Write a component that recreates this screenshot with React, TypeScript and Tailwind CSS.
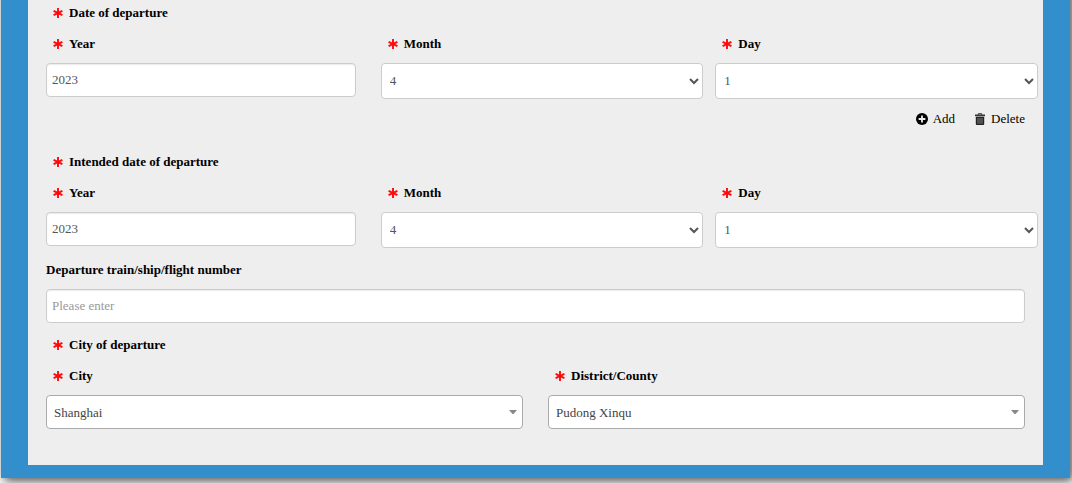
import React, { useState } from 'react';

const MONTHS = Array.from({ length: 12 }, (_, i) => String(i + 1));
const DAYS = Array.from({ length: 31 }, (_, i) => String(i + 1));

const inputClass =
  'block w-full h-[34px] px-[5px] pb-px bg-white border border-[#ccc] rounded-[4px] text-[#555] placeholder:text-[#999] shadow-[inset_0_1px_1px_rgba(0,0,0,0.08)]';

const RequiredMark = () => (
  <svg className="w-[10px] h-[10px] ml-[7px] mr-[6px] shrink-0" viewBox="0 0 10 10" aria-hidden="true">
    <path d="M5 0V10M0.6 2.8L9.4 7.2M9.4 2.8L0.6 7.2" stroke="#ff0a0a" strokeWidth="1.9" fill="none" />
  </svg>
);

const PlusCircle = () => (
  <svg className="w-3 h-3" viewBox="0 0 12 12" aria-hidden="true">
    <circle cx="6" cy="6" r="6" fill="#000" />
    <path d="M6 2.6V9.4M2.6 6H9.4" stroke="#eee" strokeWidth="1.8" />
  </svg>
);

const Trash = () => (
  <svg className="w-[10px] h-3" viewBox="0 0 10 12" aria-hidden="true">
    <path d="M3.3 1.8V0.7H6.7V1.8" stroke="#333" strokeWidth="1" fill="none" />
    <path d="M0 1.5H10V3.2H0Z" fill="#333" />
    <path d="M0.8 3.8H9.2V11Q9.2 12 8.2 12H1.8Q0.8 12 0.8 11Z" fill="#222" />
    <path d="M3 5V10.8M5 5V10.8M7 5V10.8" stroke="#aaa" strokeWidth="0.7" />
  </svg>
);

interface FieldProps {
  id: string;
  label: string;
  children: React.ReactNode;
}

const Field = ({ id, label, children }: FieldProps) => (
  <div className="min-w-0">
    <label htmlFor={id} className="flex items-center mb-[9px] font-bold text-black">
      <RequiredMark />
      {label}
    </label>
    {children}
  </div>
);

interface NumberSelectProps {
  id: string;
  value: string;
  options: string[];
  onChange: (value: string) => void;
}

const NumberSelect = ({ id, value, options, onChange }: NumberSelectProps) => (
  <select
    id={id}
    value={value}
    onChange={e => onChange(e.target.value)}
    className="block w-[calc(100%+13px)] h-9 pl-1 pb-px bg-white border border-[#ccc] rounded-[4px] text-[#555]"
  >
    {options.map(o => <option key={o}>{o}</option>)}
  </select>
);

const PlaceSelect = ({ id, options }: { id: string, options: string[] }) => (
  <div className="relative">
    <select
      id={id}
      className="block w-full h-[34px] pl-[7px] pr-6 pt-px appearance-none bg-white border border-[#aaa] rounded-[4px] text-[#444]"
    >
      {options.map(o => <option key={o}>{o}</option>)}
    </select>
    <svg className="absolute right-[6px] top-[15px] w-2 h-1 pointer-events-none" viewBox="0 0 8 4" aria-hidden="true">
      <path d="M0 0H8L4.5 4H3.5Z" fill="#888" />
    </svg>
  </div>
);

const DateFields = ({ name, title }: { name: string, title: string }) => {
  const [year, setYear] = useState('2023');
  const [month, setMonth] = useState('4');
  const [day, setDay] = useState('1');

  return (
    <fieldset className="min-w-0">
      <legend className="flex items-center mb-[11px] font-bold text-black">
        <RequiredMark />
        {title}
      </legend>
      <div className="grid grid-cols-3 gap-x-[25px]">
        <Field id={`${name}-year`} label="Year">
          <input id={`${name}-year`} type="text" value={year} onChange={e => setYear(e.target.value)} className={inputClass} />
        </Field>
        <Field id={`${name}-month`} label="Month">
          <NumberSelect id={`${name}-month`} value={month} options={MONTHS} onChange={setMonth} />
        </Field>
        <Field id={`${name}-day`} label="Day">
          <NumberSelect id={`${name}-day`} value={day} options={DAYS} onChange={setDay} />
        </Field>
      </div>
    </fieldset>
  );
};

const App: React.FC = () => {
  return (
    <div className="min-h-screen overflow-hidden bg-white pb-[5px] pl-px pr-[2px] font-['Liberation_Serif',serif] text-[13px] leading-5">
      {/* The card runs on above the window, so its top edge and shadow stay out of view */}
      <div className="-mt-4 pt-4 bg-[#328fcc] px-[27px] pb-[13px] shadow-[3px_3px_10px_rgba(0,0,0,0.7)]">
        <form className="bg-[#eee] px-[18px] pt-[3px] pb-9" onSubmit={e => e.preventDefault()}>
          <DateFields name="departure" title="Date of departure" />

          <div className="flex justify-end gap-5 mt-[10px] mb-[23px] text-black">
            <button type="button" className="flex items-center gap-[5px]">
              <PlusCircle />
              Add
            </button>
            <button type="button" className="flex items-center gap-[6px]">
              <Trash />
              Delete
            </button>
          </div>

          <DateFields name="intended" title="Intended date of departure" />

          <div className="mt-3">
            <label htmlFor="transport" className="block mb-[9px] font-bold text-black">
              Departure train/ship/flight number
            </label>
            <input id="transport" type="text" placeholder="Please enter" className={inputClass} />
          </div>

          <fieldset className="mt-3 min-w-0">
            <legend className="flex items-center mb-[11px] font-bold text-black">
              <RequiredMark />
              City of departure
            </legend>
            <div className="grid grid-cols-2 gap-x-[25px]">
              <Field id="city" label="City">
                <PlaceSelect id="city" options={['Shanghai']} />
              </Field>
              <Field id="district" label="District/County">
                <PlaceSelect id="district" options={['Pudong Xinqu']} />
              </Field>
            </div>
          </fieldset>
        </form>
      </div>
    </div>
  );
};

export default App;
